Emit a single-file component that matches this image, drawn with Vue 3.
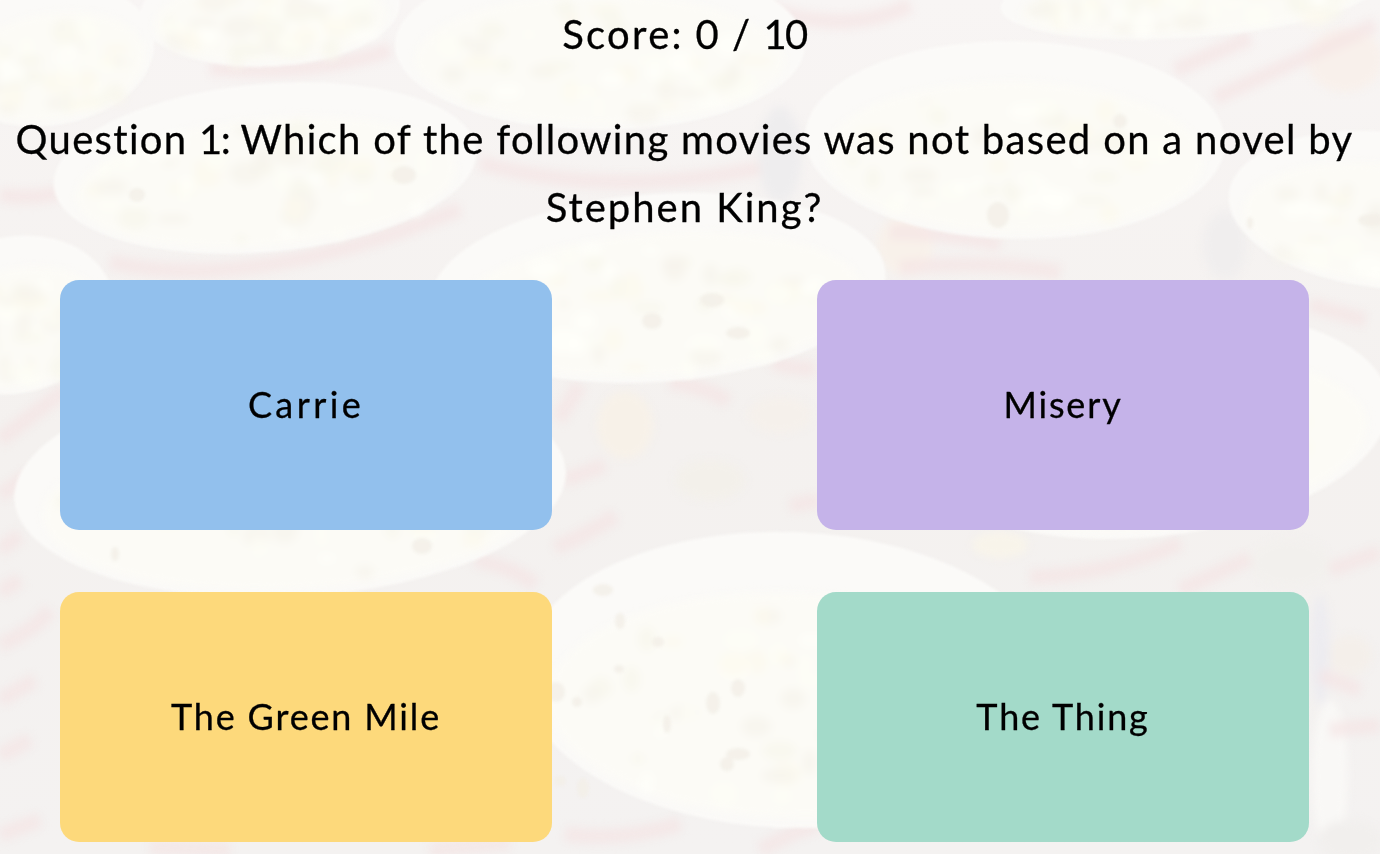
<script setup>
const answers = [
  { text: 'Carrie', tone: 'blue' },
  { text: 'Misery', tone: 'purple' },
  { text: 'The Green Mile', tone: 'yellow' },
  { text: 'The Thing', tone: 'green' },
]

// Popcorn tubs: outer rim ellipse, drawn back to front
const tubs = [
  { x: 600, y: 45, rx: 205, ry: 85, r: 0 },
  { x: 270, y: 10, rx: 130, ry: 56, r: -3 },
  { x: 50, y: 55, rx: 105, ry: 70, r: -10 },
  { x: 1190, y: -5, rx: 190, ry: 42, r: -4 },
  { x: 265, y: 168, rx: 212, ry: 84, r: -5 },
  { x: 1015, y: 140, rx: 210, ry: 99, r: 1 },
  { x: 1385, y: 210, rx: 157, ry: 78, r: 6 },
  { x: 15, y: 315, rx: 100, ry: 78, r: -14 },
  { x: 658, y: 288, rx: 228, ry: 94, r: -4 },
  { x: 1150, y: 425, rx: 240, ry: 112, r: -6 },
  { x: 290, y: 485, rx: 276, ry: 112, r: -3 },
  { x: 790, y: 680, rx: 268, ry: 148, r: 2 },
]

// Seeded generator keeps the kernels in the same place on every render
let seed = 17
const rand = () => (seed = (seed * 16807) % 2147483647) / 2147483647
const shades = ['#fffffb', '#f8f6ec', '#fefdf7', '#f7f4ed', '#fcfaee']
const kernels = tubs.flatMap((t) =>
  Array.from({ length: 50 }, (_, i) => {
    const a = rand() * Math.PI * 2
    const d = Math.sqrt(rand())
    return {
      x: t.x + Math.cos(a) * d * t.rx * 0.82,
      y: t.y + t.ry * 0.2 + Math.sin(a) * d * t.ry * 0.66,
      rx: 5 + rand() * 13,
      ry: 4 + rand() * 9,
      fill: shades[i % shades.length],
    }
  }),
)

const stripes = [
  'M210 68Q310 77 390 50', 'M0 195Q35 200 60 192', 'M110 262Q250 294 460 209',
  'M480 163Q610 198 760 168', 'M770 10Q850 35 910 5', 'M1175 70L1250 38',
  'M1215 98L1375 25', 'M890 232Q940 232 1000 244', 'M900 268Q980 260 1060 272',
  'M1310 305L1365 320', 'M0 440L65 390', 'M0 495L30 475', 'M0 550L20 535',
  'M670 382Q710 388 728 402', 'M772 362Q795 370 815 368', 'M558 420L580 385',
  'M565 480L605 465', 'M555 548Q600 528 615 515', 'M475 560Q515 568 535 585',
  'M0 645Q35 630 50 610', 'M0 700L35 680', 'M0 592L20 580', 'M0 755L30 740',
  'M0 835L40 820', 'M565 834Q620 842 680 824', 'M760 850Q800 828 818 826',
  'M1030 577Q1110 575 1180 543', 'M1180 590L1250 558', 'M820 500L790 506',
  'M1330 570L1380 552', 'M1320 675L1360 690', 'M1330 730L1380 725',
  'M150 847L230 850', 'M430 850L510 842',
]

const patches = [
  { x: 625, y: 425, rx: 28, ry: 34, fill: '#f7f1e8' },
  { x: 780, y: 415, rx: 32, ry: 18, fill: '#f5f0eb' },
  { x: 710, y: 480, rx: 35, ry: 20, fill: '#f3f0ea' },
  { x: 905, y: 245, rx: 28, ry: 30, fill: '#f8f1ea' },
  { x: 780, y: 155, rx: 22, ry: 48, fill: '#eeedee' },
  { x: 1225, y: 245, rx: 22, ry: 34, fill: '#f0eeee' },
  { x: 1345, y: 60, rx: 38, ry: 32, fill: '#f8f0eb' },
  { x: 1350, y: 655, rx: 22, ry: 20, fill: '#f4efea' },
  { x: 1290, y: 563, rx: 40, ry: 24, fill: '#f2f0ed' },
  { x: 1320, y: 650, rx: 10, ry: 55, fill: '#edecf0' },
  { x: 1330, y: 775, rx: 18, ry: 75, fill: '#f9f8f6' },
  { x: 1000, y: 545, rx: 28, ry: 13, fill: '#f8f4ea' },
  { x: 1350, y: 840, rx: 32, ry: 20, fill: '#f1efed' },
]

const specks = [
  { x: 556, y: 692, rx: 9, ry: 10 }, { x: 577, y: 702, rx: 5, ry: 5 },
  { x: 619, y: 669, rx: 5, ry: 4 }, { x: 658, y: 642, rx: 6, ry: 5 },
  { x: 603, y: 590, rx: 10, ry: 6 }, { x: 620, y: 621, rx: 5, ry: 8 },
  { x: 738, y: 688, rx: 7, ry: 9 }, { x: 713, y: 703, rx: 7, ry: 11 },
  { x: 727, y: 764, rx: 7, ry: 7 }, { x: 738, y: 754, rx: 12, ry: 6 },
  { x: 667, y: 724, rx: 4, ry: 9 }, { x: 560, y: 781, rx: 6, ry: 5 },
  { x: 583, y: 788, rx: 6, ry: 10 }, { x: 712, y: 300, rx: 12, ry: 7 },
  { x: 652, y: 321, rx: 10, ry: 8 }, { x: 738, y: 333, rx: 12, ry: 6 },
  { x: 998, y: 215, rx: 11, ry: 13 }, { x: 1120, y: 121, rx: 7, ry: 7 },
  { x: 1372, y: 220, rx: 14, ry: 6 }, { x: 1250, y: 223, rx: 3, ry: 6 },
  { x: 137, y: 195, rx: 8, ry: 7 }, { x: 404, y: 175, rx: 12, ry: 9 },
  { x: 115, y: 554, rx: 4, ry: 7 }, { x: 422, y: 546, rx: 10, ry: 8 },
]
</script>

<template>
  <main class="quiz">
    <svg class="backdrop" viewBox="0 0 1380 854" preserveAspectRatio="xMidYMid slice" aria-hidden="true">
      <defs>
        <filter id="soft" x="-5%" y="-5%" width="110%" height="110%" color-interpolation-filters="sRGB">
          <feGaussianBlur stdDeviation="4" />
        </filter>
        <filter id="edge" x="-5%" y="-5%" width="110%" height="110%" color-interpolation-filters="sRGB">
          <feGaussianBlur stdDeviation="1.8" />
        </filter>
        <linearGradient id="table" x1="0" y1="0" x2="0" y2="1">
          <stop offset="0" stop-color="#f8f5f4" />
          <stop offset="0.5" stop-color="#f4f1ef" />
          <stop offset="1" stop-color="#f4f2f1" />
        </linearGradient>
      </defs>
      <rect width="1380" height="854" fill="url(#table)" />
      <g filter="url(#soft)">
        <ellipse v-for="(p, i) in patches" :key="i" :cx="p.x" :cy="p.y" :rx="p.rx" :ry="p.ry" :fill="p.fill" />
        <path v-for="(d, i) in stripes" :key="'s' + i" :d="d" class="stripe" />
      </g>
      <g filter="url(#edge)">
        <ellipse
          v-for="(t, i) in tubs" :key="i" :cx="t.x" :cy="t.y" :rx="t.rx" :ry="t.ry"
          :transform="`rotate(${t.r} ${t.x} ${t.y})`" fill="#fbfaf8"
        />
      </g>
      <g filter="url(#soft)">
        <ellipse
          v-for="(t, i) in tubs" :key="i" :cx="t.x" :cy="t.y + t.ry * 0.17" :rx="t.rx * 0.9" :ry="t.ry * 0.76"
          :transform="`rotate(${t.r} ${t.x} ${t.y})`" fill="#fcfbf6"
        />
        <ellipse
          v-for="(k, i) in kernels" :key="'k' + i" :cx="k.x" :cy="k.y" :rx="k.rx" :ry="k.ry" :fill="k.fill"
          opacity="0.7"
        />
      </g>
      <g filter="url(#edge)">
        <ellipse v-for="(s, i) in specks" :key="i" :cx="s.x" :cy="s.y" :rx="s.rx" :ry="s.ry" fill="#f2efe7" opacity="0.8" />
      </g>
    </svg>

    <p class="score"><span class="label">Score:</span> 0 / <span class="total">10</span></p>
    <h1 class="question">
      <span class="lead">Question <span class="number">1:</span> Which of the following movies was not based on a novel by</span>
      <span class="tail">Stephen King?</span>
    </h1>
    <div class="answers">
      <button v-for="a in answers" :key="a.text" type="button" class="answer" :class="a.tone">
        <span>{{ a.text }}</span>
      </button>
    </div>
  </main>
</template>

<style>
body {
  margin: 0;
  overflow: hidden;
}
</style>

<style scoped>
.quiz {
  position: relative;
  isolation: isolate;
  box-sizing: border-box;
  width: 100%;
  height: 854px;
  padding-right: 11px;
  overflow: hidden;
  color: #000;
  font-family: Lato, 'Open Sans', sans-serif;
  font-size: 40px;
  line-height: 68px;
  text-align: center;
  -webkit-text-stroke: 0.3px #000;
}
.backdrop {
  position: absolute;
  inset: 0;
  z-index: -1;
  width: 100%;
  height: 100%;
}
.stripe {
  fill: none;
  stroke: #f4e4e3;
  stroke-width: 15;
  opacity: 0.65;
}
.score {
  margin: 0;
  letter-spacing: 1.5px;
}
.label {
  letter-spacing: 2.3px;
}
.total {
  letter-spacing: -1.5px;
}
.question {
  display: flex;
  flex-direction: column;
  align-items: center;
  margin: 37px 0 0;
  font-size: inherit;
  font-weight: 400;
  white-space: nowrap;
}
.lead {
  letter-spacing: 1.32px;
}
.number {
  letter-spacing: -1.4px;
}
.tail {
  letter-spacing: 2px;
}
.answers {
  display: grid;
  grid-template-columns: 492px 492px;
  grid-auto-rows: 250px;
  justify-content: space-between;
  gap: 62px 0;
  margin: 39px 60px 0;
}
.answer {
  padding: 0 0 3px;
  border: 0;
  border-radius: 19px;
  color: #000;
  font: 400 36px/60px Lato, 'Open Sans', sans-serif;
  letter-spacing: 1.85px;
}
.blue {
  background: #92c0ed;
  letter-spacing: 3.4px;
}
.purple { background: #c5b3e9; }
.yellow { background: #fdd97b; }
.green { background: #a3dac9; }
</style>
